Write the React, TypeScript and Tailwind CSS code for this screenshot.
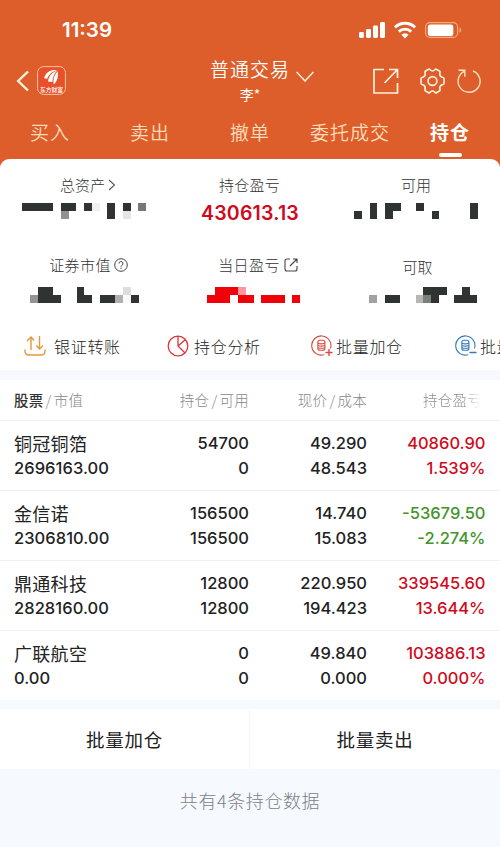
import React from 'react';

type Cell = [x: number, y: number, w: number, h: number, fill?: string];

interface Holding {
  name: string;
  value: string;
  amount: string;
  available: string;
  price: string;
  cost: string;
  profit: string;
  rate: string;
  color: string;
}

const U = 7.75;

const holdings: Holding[] = [
  { name: '铜冠铜箔', value: '2696163.00', amount: '54700', available: '0', price: '49.290', cost: '48.543', profit: '40860.90', rate: '1.539%', color: 'text-[#cf0a1c]' },
  { name: '金信诺', value: '2306810.00', amount: '156500', available: '156500', price: '14.740', cost: '15.083', profit: '-53679.50', rate: '-2.274%', color: 'text-[#43942b]' },
  { name: '鼎通科技', value: '2828160.00', amount: '12800', available: '12800', price: '220.950', cost: '194.423', profit: '339545.60', rate: '13.644%', color: 'text-[#cf0a1c]' },
  { name: '广联航空', value: '0.00', amount: '0', available: '0', price: '49.840', cost: '0.000', profit: '103886.13', rate: '0.000%', color: 'text-[#cf0a1c]' },
];

const totalCells: Cell[] = [[0, 0, 4, 1], [5, 0, 2, 1], [5, 1, 1, 1, '#919191'], [8, 0, 1, 1], [9, 0, 1, 1, '#f1f1f1'], [11, 0, 1, 2], [13, 0, 1, 1], [13, 1, 1, 1, '#e5e5e5'], [15, 0, 1, 1, '#777777']];
const usableCells: Cell[] = [[0, 1, 1, 1], [2, 0, 1, 2], [4, 0, 1, 2], [5, 0, 1, 1], [8, 0, 1, 1], [10, 1, 1, 1], [15, 0, 1, 2]];
const marketCells: Cell[] = [[0, 1, 1, 1, '#949494'], [1, 0, 2, 2], [3, 1, 1, 1], [6, 0, 1, 2], [7, 1, 1, 1], [9, 1, 2, 1], [11, 1, 1, 1, '#b0b0b0'], [12, 0, 1, 1, '#dddddd'], [12, 1, 1, 1, '#fafafa'], [13, 1, 1, 1]];
const todayCells: Cell[] = [[1, 0, 3, 1], [4, 0, 1, 1, '#ff96a0'], [0, 1, 3, 1], [4, 1, 2, 1], [7, 1, 3, 1], [11, 1, 1, 1]];
const cashCells: Cell[] = [[0, 1, 1, 1, '#a2a2a2'], [2, 1, 2, 1], [6, 1, 1, 1, '#b7b7b7'], [7, 0, 3, 1], [7, 1, 1, 1, '#7c807d'], [8, 1, 1, 1], [11, 1, 3, 1], [12, 0, 1, 1]];

function Mosaic({ cells, cols, color = '#2f3332' }: { cells: Cell[]; cols: number; color?: string }) {
  return (
    <svg width={cols * U} height={U * 2} shapeRendering="crispEdges">
      {cells.map(([x, y, w, h, fill], i) => (
        <rect key={i} x={x * U} y={y * U} width={w * U} height={h * U} fill={fill ?? color} />
      ))}
    </svg>
  );
}

function BatchIcon({ color, plus }: { color: string; plus?: boolean }) {
  return (
    <svg width="22" height="22" viewBox="0 0 22 22" fill="none" stroke={color} strokeWidth="1.1" strokeLinecap="round">
      <path d="M12.8 19.8A9.6 9.6 0 1 1 19.6 13" />
      <rect x="6.9" y="5.3" width="7" height="10" rx="2" />
      <path d="M7.2 8.3q3.3 1.2 6.4 0M7.2 10.5q3.3 1.2 6.4 0M7.2 12.7q3.3 1.2 6.4 0" />
      <path d={plus ? 'M15 17.5h6M18 14.5v6' : 'M15 17.5h6'} strokeWidth="1.4" />
    </svg>
  );
}

function StatusBar() {
  return (
    <div className="flex h-[60px] items-center justify-between pl-[62px] pr-[38px] text-white">
      <span className="font-[Inter] text-[20.5px] leading-none font-semibold">11:39</span>
      <div className="flex items-center gap-[9px]">
        <svg width="26" height="18" fill="currentColor">
          <rect x="0" y="11" width="5" height="6" rx="1.4" />
          <rect x="7" y="8" width="5" height="9" rx="1.4" />
          <rect x="14" y="4.5" width="5" height="12.5" rx="1.4" />
          <rect x="21" y="1" width="5" height="16" rx="1.4" />
        </svg>
        <svg width="22" height="18" viewBox="0 0 22 18" fill="none" stroke="currentColor" strokeWidth="2.9">
          <path d="M1 6.4a14.3 14.3 0 0 1 20 0" />
          <path d="M4.8 10.6a8.9 8.9 0 0 1 12.4 0" />
          <path d="M11 17.5l-3.6-3.7a5 5 0 0 1 7.2 0z" fill="currentColor" stroke="none" />
        </svg>
        <svg width="37" height="18" fill="none">
          <rect x="0.6" y="1.6" width="32" height="14.8" rx="4.2" stroke="#f5ad7c" strokeWidth="1.1" />
          <rect x="2.8" y="3.5" width="25.5" height="11.5" rx="2.5" fill="#fff" />
          <path d="M34.5 6.5c2.3.6 2.3 4.6 0 5.2z" fill="#f5ad7c" />
        </svg>
      </div>
    </div>
  );
}

function NavBar() {
  return (
    <div className="grid h-[46px] grid-cols-[1fr_110px_1fr] text-white">
      <div className="flex items-center pb-[5px] pl-4">
        <svg width="14" height="22" fill="none" stroke="#fff2df" strokeWidth="2.4">
          <path d="M12 1.5L2.2 11l9.8 9.5" />
        </svg>
        <svg width="29" height="29" viewBox="0 0 29 29" className="ml-[7px]">
          <rect x="0.6" y="0.6" width="27.8" height="27.8" rx="6" fill="#e8502c" stroke="#ffc49b" />
          <path d="M7 12C9 6 13.5 3.5 20 4c-5 1.8-8 4-10 9z" fill="#fff" />
          <path d="M11 15.5C11.8 10 15 6.5 20.3 4.6c-3.3 3-4.3 6.4-5 11.4z" fill="#fff" />
          <path d="M16.5 18.5c-.5-5.5.8-10 4.2-13.3.8 5 0 9.8-4.2 13.3z" fill="#fff" />
          <text x="14.5" y="25.5" textAnchor="middle" fontSize="5.8" fontWeight="500" fill="#fff" fontFamily="Noto Sans CJK SC, sans-serif">东方财富</text>
        </svg>
      </div>
      <div className="flex flex-col items-center">
        <div className="-mt-[5px] flex items-center">
          <span className="pl-[24px] text-[19px] leading-[23px] font-[350] tracking-[1px] whitespace-nowrap">普通交易</span>
          <svg width="18" height="15" fill="none" stroke="#fff2df" strokeWidth="1.5" className="mt-3 ml-[6px] shrink-0">
            <path d="M0.6 5l8.4 9L17.4 5" />
          </svg>
        </div>
        <span className="text-[14px] leading-[24px]">李*</span>
      </div>
      <div className="flex items-center justify-end pr-[19px] pb-1">
        <svg width="26" height="26" fill="none" stroke="#fff2df" strokeWidth="1.7">
          <path d="M11 1.5H1V25h23.5V15M16 1.5h8.5V10M24 2L11.5 15" />
        </svg>
        <svg width="27" height="26" viewBox="0 0 27 26" fill="none" stroke="#fff2df" strokeWidth="1.6" strokeLinejoin="round" className="ml-[20px]">
          <path d="M9.2 1.5q1.2-.8 2 .3 2.3 2.4 4.6 0 .8-1.1 2-.3l2.6 1.5q1 .7.5 1.9-.8 3.3 2.4 4.3 1.7.2 1.7 1.5v4.6q0 1.3-1.7 1.5-3.2 1-2.4 4.3.5 1.2-.5 1.9l-2.6 1.5q-1.2.8-2-.3-2.3-2.4-4.6 0-.8 1.1-2 .3L6.6 23q-1-.7-.5-1.9.8-3.3-2.4-4.3Q2 16.6 2 15.3v-4.6q0-1.3 1.7-1.5 3.2-1 2.4-4.3Q5.6 3.7 6.6 3z" />
          <circle cx="13.5" cy="13" r="4.4" />
        </svg>
        <svg width="24" height="26" fill="none" stroke="#ffe0bf" strokeWidth="1.4" className="ml-[11px]">
          <path d="M7.7 3.2A11 11 0 1 0 16 3M1.5 2.3h6.3v6.5" />
        </svg>
      </div>
    </div>
  );
}

function Tabs() {
  const tabs = ['买入', '卖出', '撤单', '委托成交'];
  return (
    <div className="grid h-[53px] grid-cols-5 text-[19px] tracking-[1px] text-[#ffdcba]">
      {tabs.map((tab) => (
        <span key={tab} className="pt-3 text-center leading-7 font-[350] whitespace-nowrap">{tab}</span>
      ))}
      <div className="flex flex-col items-center pt-3 font-bold text-white">
        <span className="leading-7">持仓</span>
        <span className="mt-[7px] h-1 w-[23px] rounded-full bg-white" />
      </div>
    </div>
  );
}

function Summary() {
  return (
    <section className="rounded-t-[9px] bg-white">
      <div className="grid h-[81px] grid-cols-[168px_164px_168px] text-[15px] font-light text-[#333]">
        <div className="flex flex-col items-center pt-[15px]">
          <div className="flex items-center pl-2 leading-[22px]">
            总资产
            <svg width="8" height="12" fill="none" stroke="#555" strokeWidth="1.1" className="ml-[3px]"><path d="M1 1l5.5 5L1 11" /></svg>
          </div>
          <div className="mt-[7px]"><Mosaic cells={totalCells} cols={16} /></div>
        </div>
        <div className="flex flex-col items-center pt-[15px]">
          <span className="pr-px leading-[22px] tracking-[0.2px]">持仓盈亏</span>
          <span className="mt-[5px] font-[Inter] text-[19.5px] leading-6 font-semibold tracking-[0.2px] text-[#cf0a1c]">430613.13</span>
        </div>
        <div className="flex flex-col items-center pt-[15px]">
          <span className="leading-[22px]">可用</span>
          <div className="mt-[7px]"><Mosaic cells={usableCells} cols={16} /></div>
        </div>
      </div>
      <div className="grid h-[82px] grid-cols-[168px_164px_168px] text-[15px] font-light text-[#333]">
        <div className="flex flex-col items-center pt-[14px]">
          <div className="flex items-center pl-[9px] leading-[22px] tracking-[0.4px]">
            证券市值
            <svg width="14" height="14" fill="none" stroke="#444" strokeWidth="1" className="ml-[3px]">
              <circle cx="7" cy="7" r="6.3" />
              <path d="M5 5.5a2 2 0 1 1 2.9 1.8Q7 7.7 7 8.7M7 9.7v1.2" />
            </svg>
          </div>
          <div className="mt-[11px] pl-px"><Mosaic cells={marketCells} cols={14} /></div>
        </div>
        <div className="flex flex-col items-center pt-[14px]">
          <div className="flex items-center pl-4 leading-[22px] tracking-[0.4px]">
            当日盈亏
            <svg width="14" height="14" fill="none" stroke="#444" strokeWidth="1.1" className="ml-1">
              <path d="M6 1H3Q1 1 1 3v8q0 2 2 2h8q2 0 2-2V8M9 1h4v4M13 1L6 8" />
            </svg>
          </div>
          <div className="mt-[11px] pl-[7px]"><Mosaic cells={todayCells} cols={12} color="#f00008" /></div>
        </div>
        <div className="flex flex-col items-center pt-4">
          <span className="pl-[3px] leading-[22px]">可取</span>
          <div className="mt-[9px] pl-[14px]"><Mosaic cells={cashCells} cols={14} /></div>
        </div>
      </div>
      <div className="flex h-[48px] items-center overflow-hidden pl-6 text-[16px] tracking-[0.7px] whitespace-nowrap text-[#222]">
        <div className="flex w-[143px] shrink-0 items-center">
          <svg width="22" height="22" fill="none" stroke="#e29a3c" strokeWidth="1.4">
            <path d="M1 14.5V16q0 4 4 4h12q4 0 4-4v-1.5M7 15V2M3 6l4-4 3 3.5M15.5 1v13M12.2 10.5l3.3 3.5 3.5-3.5" />
          </svg>
          <span className="-mt-px ml-2 font-light">银证转账</span>
        </div>
        <div className="flex w-[144px] shrink-0 items-center">
          <svg width="22" height="22" fill="none" stroke="#d9363e" strokeWidth="1.3">
            <circle cx="11" cy="11" r="9.8" />
            <path d="M11 1v10l7 7M11 11l7.5-6.5" />
          </svg>
          <span className="-mt-px ml-[5px] font-light">持仓分析</span>
        </div>
        <div className="flex w-[144px] shrink-0 items-center">
          <BatchIcon color="#d94a3c" plus />
          <span className="-mt-px ml-[3px] font-light">批量加仓</span>
        </div>
        <div className="flex shrink-0 items-center">
          <BatchIcon color="#3478be" />
          <span className="-mt-px ml-[3px] font-light">批量卖出</span>
        </div>
      </div>
    </section>
  );
}

function HoldingRow({ item }: { item: Holding }) {
  return (
    <div className="grid h-[70px] grid-cols-[136px_99px_118px_118.5px] content-center border-t border-[#f0f1f3] pl-[14px] font-[Inter] text-[16.5px] leading-[25px] font-medium text-[#222]">
      <span className="font-['Noto_Sans_CJK_SC'] text-[18px] font-normal tracking-[0.3px]">{item.name}</span>
      <span className="text-right">{item.amount}</span>
      <span className="text-right">{item.price}</span>
      <span className={`text-right ${item.color}`}>{item.profit}</span>
      <span className="tracking-[0.05px]">{item.value}</span>
      <span className="text-right">{item.available}</span>
      <span className="text-right">{item.cost}</span>
      <span className={`text-right ${item.color}`}>{item.rate}</span>
    </div>
  );
}

export default function App() {
  return (
    <div className="min-h-[847px] w-[500px] overflow-hidden bg-[#f6faff] font-['Noto_Sans_CJK_SC',sans-serif]">
      <div className="bg-[#dd5e2a]">
        <StatusBar />
        <NavBar />
        <Tabs />
        <Summary />
      </div>

      <section className="mt-[10px] bg-white">
        <div className="grid h-[40px] grid-cols-[136px_99px_118px_133px] items-center pb-px pl-[14px] text-[14.5px] font-light tracking-[0.3px] whitespace-nowrap text-[#888]">
          <span><b className="font-medium text-[#333]">股票</b><span className="px-[2px]">/</span>市值</span>
          <span className="text-right">持仓<span className="px-[2px]">/</span>可用</span>
          <span className="text-right">现价<span className="px-[2px]">/</span>成本</span>
          <span className="bg-linear-to-r from-[#888] from-73% to-transparent to-86% bg-clip-text pl-[56px] text-transparent">持仓盈亏</span>
        </div>
        {holdings.map((item) => (
          <HoldingRow key={item.name} item={item} />
        ))}
      </section>

      <div className="mt-[9px] grid h-[60px] grid-cols-2 bg-white pt-px text-[18.5px] tracking-[0.8px] text-[#222]">
        <button className="border-r border-[#f3f6fa]">批量加仓</button>
        <button>批量卖出</button>
      </div>
      <p className="pt-[18px] text-center text-[18px] leading-[26px] font-light tracking-[0.6px] text-[#7d8186]">共有4条持仓数据</p>
    </div>
  );
}
